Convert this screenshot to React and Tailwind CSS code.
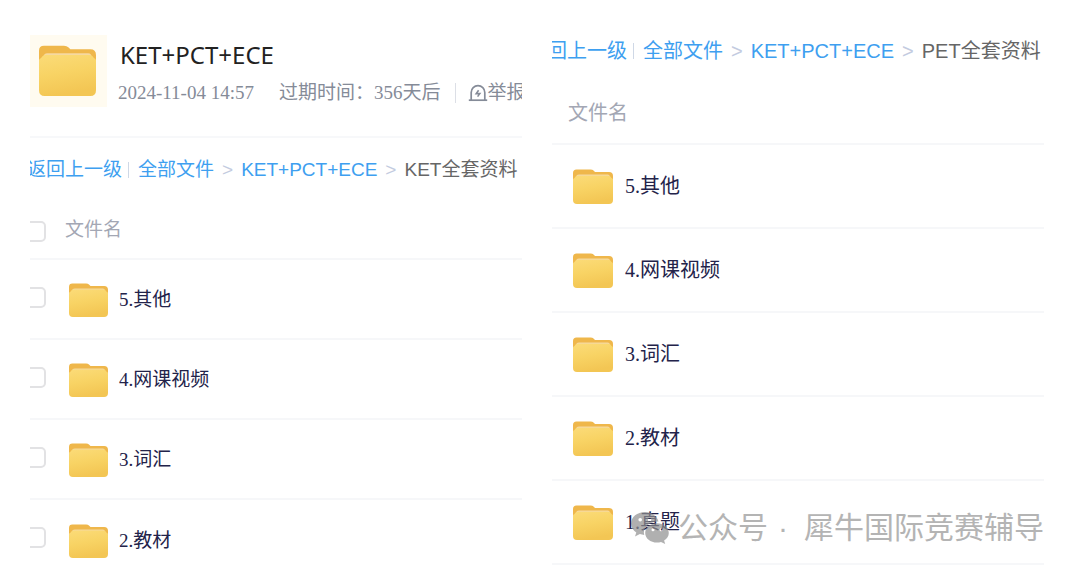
import React from "react";

const SANS = "font-['Liberation_Sans','Noto_Sans_CJK_SC',sans-serif]";
const SERIF = "font-['Liberation_Serif','Noto_Sans_CJK_SC',serif]";

function Folder({ id, className }) {
  return (
    <svg viewBox="0 0 40 35" preserveAspectRatio="none" className={className} aria-hidden="true">
      <defs>
        <linearGradient id={id} x1="0" y1="0" x2="0.25" y2="1">
          <stop offset="0" stopColor="#fbdb78" />
          <stop offset="0.5" stopColor="#f8d364" />
          <stop offset="1" stopColor="#f3c654" />
        </linearGradient>
      </defs>
      <path d="M0 4Q0 0.5 3.5 0.5H17.500Q19.500 0.5 20.800 1.800L22 3H36Q40 3 40 7V14H0Z" fill="#efb74b" />
      <path d="M3 9Q3 5.600 6 5.600H34.5Q37 5.600 37 9Z" fill="#f6d9a0" />
      <path d="M0 10.500Q0 9.500 1.500 9Q2.500 6.800 5 6.800H35Q37.500 6.800 38.500 9Q40 9.500 40 10.500V31Q40 35 36 35H4Q0 35 0 31Z" fill={`url(#${id})`} />
    </svg>
  );
}

function ReportIcon() {
  return (
    <svg viewBox="0 0 20 18" className="h-[18px] w-5 shrink-0" fill="none" stroke="#858b98" strokeWidth="1.7" aria-hidden="true">
      <path d="M3.2 16V8.4A6.8 6.8 0 0 1 16.8 8.4V16" />
      <path d="M0.8 16.2H19.2" />
      <path d="M10.6 6.2L8.200 9.6H11.800L9.600 12.6" strokeWidth="1.6" />
    </svg>
  );
}

function WeChatIcon() {
  return (
    <svg viewBox="0 0 38 32" className="h-8 w-[38px] shrink-0 opacity-70" aria-hidden="true">
      <path
        fill="#909090"
        fillRule="evenodd"
        d="M14 0C6.300 0 0 5.100 0 11.500C0 15.200 2.100 18.400 5.300 20.500L4 24.600L8.900 22.100C10.300 22.600 11.700 22.800 13.200 22.900C11.500 16.300 17.200 9.700 27.500 9.600C26.200 4.100 20.600 0 14 0ZM9.200 6A1.800 1.800 0 1 1 9.200 9.600A1.800 1.800 0 0 1 9.200 6ZM18.600 6A1.800 1.800 0 1 1 18.600 9.600A1.800 1.800 0 0 1 18.600 6Z"
      />
      <path
        fill="#909090"
        fillRule="evenodd"
        d="M26 11.200C19.400 11.200 14.200 15.500 14.200 20.900C14.200 26.300 19.400 30.500 26 30.500C27.400 30.500 28.800 30.300 30 29.900L34.200 32L33.100 28.400C36 26.600 37.800 23.900 37.800 20.900C37.800 15.500 32.500 11.200 26 11.200ZM22 16.200A1.500 1.500 0 1 1 22 19.200A1.500 1.500 0 0 1 22 16.200ZM30 16.200A1.500 1.500 0 1 1 30 19.200A1.500 1.500 0 0 1 30 16.200Z"
      />
    </svg>
  );
}

function Breadcrumb({ current, className }) {
  return (
    <nav aria-label="路径" className={`${SANS} flex items-center whitespace-nowrap text-[#3e9ff0] ${className}`}>
      <a href="#back">返回上一级</a>
      <span className="mr-[9px] ml-[6px] h-4 w-px bg-[#cfd8e6]" />
      <a href="#all">全部文件</a>
      <span className="mx-2 text-[#c3cbe0]">&gt;</span>
      <a href="#parent">KET+PCT+ECE</a>
      <span className="mx-2 text-[#c3cbe0]">&gt;</span>
      <span className="text-[#666]">{current}</span>
    </nav>
  );
}

function Check({ label }) {
  return (
    <input
      type="checkbox"
      aria-label={label}
      className="-ml-[5px] block size-[21px] appearance-none rounded-[5px] border-2 border-[#e2e2e4] bg-white"
    />
  );
}

const LEFT = ["5.其他", "4.网课视频", "3.词汇", "2.教材"];
const RIGHT = ["5.其他", "4.网课视频", "3.词汇", "2.教材", "1.真题"];

export default function App() {
  return (
    <main className="grid grid-cols-2 gap-[30px] bg-white pt-[35px] pr-9 pl-[30px]">
      <section className="min-w-0 overflow-hidden text-[19px] leading-7">
        <header className="flex h-[103px] border-b-2 border-[#f7f8fa]">
          <div className="h-[72px] w-[77px] shrink-0 bg-[#fffbf0] pt-[10px] pl-[9px]">
            <Folder id="folder-main" className="h-[51px] w-[57px]" />
          </div>
          <div className="ml-[11px] min-w-0 pt-1">
            <h1 className="pl-[2px] font-['Noto_Sans',sans-serif] text-2xl leading-8 text-[#222]">KET+PCT+ECE</h1>
            <div className={`${SERIF} mt-2 flex items-center whitespace-nowrap text-[#858b98]`}>
              <span>2024-11-04 14:57</span>
              <span className="ml-[25px]">过期时间：356天后</span>
              <span className="mr-3 ml-[14px] h-5 w-px shrink-0 bg-[#dcdfe6]" />
              <button type="button" className="flex items-center">
                <ReportIcon />
                举报
              </button>
            </div>
          </div>
        </header>
        <Breadcrumb current="KET全套资料" className="-ml-[3px] h-[63px]" />
        <table className="w-full">
          <thead>
            <tr className="h-[58px] border-b-2 border-[#f6f7f9]">
              <th className="w-[35px] p-0 pt-1"><Check label="全选" /></th>
              <th className={`${SANS} p-0 text-left font-normal text-[#a3a7b4]`}>文件名</th>
            </tr>
          </thead>
          <tbody className={`${SERIF} text-[#23234a]`}>
            {LEFT.map((name, i) => (
              <tr key={name} className="h-20 border-b-2 border-[#f6f7f9] last:border-0">
                <td className="p-0 pb-1"><Check label={`选择 ${name}`} /></td>
                <td className="p-0 pt-[2px] pl-1">
                  <a href="#folder" className="flex items-center gap-[11px]">
                    <Folder id={`folder-l${i}`} className="h-[34px] w-[39px]" />
                    {name}
                  </a>
                </td>
              </tr>
            ))}
          </tbody>
        </table>
      </section>

      <section className="relative min-w-0 text-xl leading-7">
        <div className="overflow-hidden">
          <Breadcrumb current="PET全套资料" className="-ml-[25px] mb-4 h-8" />
        </div>
        <table className="w-full">
          <thead>
            <tr className="h-[61px] border-b-2 border-[#f6f7f9]">
              <th className={`${SANS} p-0 pl-4 text-left font-normal text-[#a3a7b4]`}>文件名</th>
            </tr>
          </thead>
          <tbody className={`${SERIF} text-[#23234a]`}>
            {RIGHT.map((name, i) => (
              <tr key={name} className="h-[84px] border-b-2 border-[#f6f7f9]">
                <td className="p-0 pl-[21px]">
                  <a href="#folder" className="flex items-center gap-3">
                    <Folder id={`folder-r${i}`} className="h-[35px] w-10" />
                    {name}
                  </a>
                </td>
              </tr>
            ))}
          </tbody>
        </table>
        <div className={`${SANS} pointer-events-none absolute right-0 top-[475px] flex items-center whitespace-nowrap text-3xl text-[#b4b4b4]`}>
          <WeChatIcon />
          <span className="ml-[9px]">公众号</span>
          <span className="mr-4 ml-[10px]">·</span>
          <span>犀牛国际竞赛辅导</span>
        </div>
      </section>
    </main>
  );
}
